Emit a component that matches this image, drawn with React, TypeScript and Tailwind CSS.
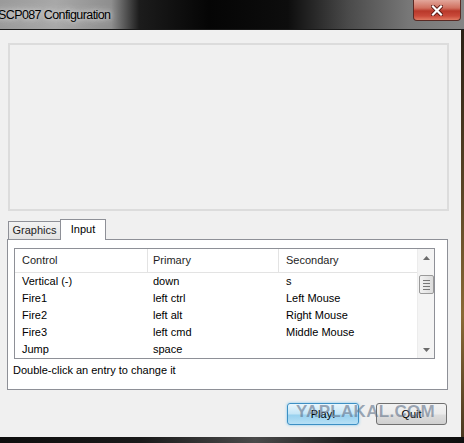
import { useState } from 'react';

type Binding = {
  control: string;
  primary: string;
  secondary: string;
};

const bindings: Binding[] = [
  { control: 'Vertical (-)', primary: 'down', secondary: 's' },
  { control: 'Fire1', primary: 'left ctrl', secondary: 'Left Mouse' },
  { control: 'Fire2', primary: 'left alt', secondary: 'Right Mouse' },
  { control: 'Fire3', primary: 'left cmd', secondary: 'Middle Mouse' },
  { control: 'Jump', primary: 'space', secondary: '' },
];

const font = "font-['Liberation_Sans',Arial,sans-serif]";

function CloseButton() {
  return (
    <button
      type="button"
      className="w-[48px] h-[21px] rounded-b-[4px] border border-t-0 border-[#5a2a24] bg-[linear-gradient(to_bottom,#e2a79b_0%,#d0705f_40%,#b9382a_55%,#c94a3a_80%,#e27a62_100%)] flex items-center justify-center"
    >
      <svg width="12" height="11" viewBox="0 0 12 11">
        <path d="M2 1.5 L10 9.5 M10 1.5 L2 9.5" stroke="#5b1a14" strokeWidth="4" strokeLinecap="square" />
        <path d="M2 1.5 L10 9.5 M10 1.5 L2 9.5" stroke="#ffffff" strokeWidth="2.2" strokeLinecap="square" />
      </svg>
    </button>
  );
}

function TitleBar() {
  return (
    <div className="h-[30px] flex items-start justify-between bg-[linear-gradient(to_right,#9a9a9a_0%,#a8a8a8_12%,#8e8e8e_24%,#1c1c1c_30%,#050505_45%,#0d0d0d_62%,#4a4a4a_75%,#777_88%,#858585_100%)] border-b border-[#1a1a1a]">
      <span className={`${font} text-[12.5px] tracking-[-0.6px] text-black ml-[-2px] mt-[8px] leading-[14px] whitespace-nowrap [text-shadow:0_0_8px_#dcdcdc,0_0_4px_#dcdcdc]`}>
        SCP087 Configuration
      </span>
      <div className="mr-[3px]">
        <CloseButton />
      </div>
    </div>
  );
}

function ScrollBar() {
  return (
    <div className="w-[17px] h-full bg-[#f4f4f4] border-l border-[#ececec] flex flex-col items-center">
      <div className="h-[17px] flex items-center justify-center">
        <svg width="7" height="4" viewBox="0 0 7 4">
          <path d="M0 4 L3.5 0 L7 4 Z" fill="#6b6b6b" />
        </svg>
      </div>
      <div className="h-[19px] w-[15px] mt-[9px] rounded-[2px] border border-[#9a9a9a] bg-[linear-gradient(to_right,#f2f2f2,#dcdcdc)] flex flex-col items-center justify-center gap-[2px]">
        <div className="w-[7px] h-px bg-[#777]" />
        <div className="w-[7px] h-px bg-[#777]" />
        <div className="w-[7px] h-px bg-[#777]" />
        <div className="w-[7px] h-px bg-[#777]" />
      </div>
      <div className="flex-1" />
      <div className="h-[17px] flex items-center justify-center">
        <svg width="7" height="4" viewBox="0 0 7 4">
          <path d="M0 0 L7 0 L3.5 4 Z" fill="#6b6b6b" />
        </svg>
      </div>
    </div>
  );
}

function BindingList() {
  return (
    <div className="w-[421px] h-[111px] border border-[#8e9097] bg-white flex">
      <div className="flex-1 flex flex-col">
        <div className="h-[25px] flex border-b border-[#e3e3e3] text-[#1e1e1e]">
          <div className="w-[133px] border-r border-[#e3e3e3] pl-[7px] flex items-center">Control</div>
          <div className="w-[131px] border-r border-[#e3e3e3] pl-[5px] flex items-center">Primary</div>
          <div className="flex-1 pl-[7px] flex items-center">Secondary</div>
        </div>
        {bindings.map((b) => (
          <div key={b.control} className="h-[17px] flex items-center text-black">
            <div className="w-[133px] pl-[7px]">{b.control}</div>
            <div className="w-[131px] pl-[5px]">{b.primary}</div>
            <div className="flex-1 pl-[7px]">{b.secondary}</div>
          </div>
        ))}
      </div>
      <ScrollBar />
    </div>
  );
}

export default function App() {
  const [tab, setTab] = useState<'graphics' | 'input'>('input');

  return (
    <div className={`${font} w-[464px] h-[443px] bg-black flex flex-col overflow-hidden text-[11px] leading-[17px]`}>
      <TitleBar />
      <div className="flex flex-1">
        <div className="w-[461px] bg-[#f0f0f0] flex flex-col relative">
          {/* preview area */}
          <div className="mt-[13px] ml-[8px] w-[441px] h-[168px] border-2 border-double border-[#dcdcdc]" />

          {/* tabs */}
          <div className="mt-[7px] ml-[8px] flex items-end h-[21px]">
            <button
              type="button"
              onClick={() => setTab('graphics')}
              className="w-[53px] h-[18px] border border-b-0 border-[#8e9097] bg-[linear-gradient(to_bottom,#f3f3f3,#e2e2e2)] text-[#1e1e1e] flex items-center justify-center relative z-0"
            >
              Graphics
            </button>
            <button
              type="button"
              onClick={() => setTab('input')}
              className="w-[46px] h-[21px] -ml-px border border-b-0 border-[#8e9097] bg-white text-black flex items-start justify-center pt-[1px] relative z-10 mb-[-1px]"
            >
              Input
            </button>
          </div>

          <div className="ml-[7px] w-[441px] h-[151px] border border-[#8e9097] bg-white pt-[8px] pl-[6px]">
            {tab === 'input' && <BindingList />}
            <div className="mt-[3px] ml-[-1px] text-black">Double-click an entry to change it</div>
          </div>

          {/* dialog buttons */}
          <div className="mt-[13px] flex justify-end gap-[17px] pr-[14px]">
            <button
              type="button"
              className="w-[72px] h-[22px] rounded-[3px] border border-[#3c8fc4] bg-[linear-gradient(to_bottom,#e8f6fd,#c4e5f6_50%,#98d1ef_55%,#b7e0f5)] shadow-[0_0_3px_#7cc7ee] text-black"
            >
              Play!
            </button>
            <button
              type="button"
              className="w-[71px] h-[22px] rounded-[3px] border border-[#707070] bg-[linear-gradient(to_bottom,#f2f2f2,#ebebeb_50%,#dddddd_55%,#cfcfcf)] text-black"
            >
              Quit
            </button>
          </div>

          {/* site watermark over the buttons */}
          <div className="absolute left-[296px] top-[372px] font-['Liberation_Sans',Arial,sans-serif] font-bold text-[17px] leading-[20px] tracking-[0.3px] text-[#5f7088]/60 pointer-events-none whitespace-nowrap">
            YAPLAKAL.COM
          </div>
        </div>
        <div className="w-[3px] bg-[linear-gradient(to_bottom,#2a2015,#5a4526_40%,#8a6a36_70%,#4a3820)]" />
      </div>
      <div className="h-[6px] bg-[linear-gradient(to_right,#0e0e0e,#1a1a1a_30%,#4a4a4a_55%,#1e1e1e_75%,#0e0e0e)]" />
    </div>
  );
}
